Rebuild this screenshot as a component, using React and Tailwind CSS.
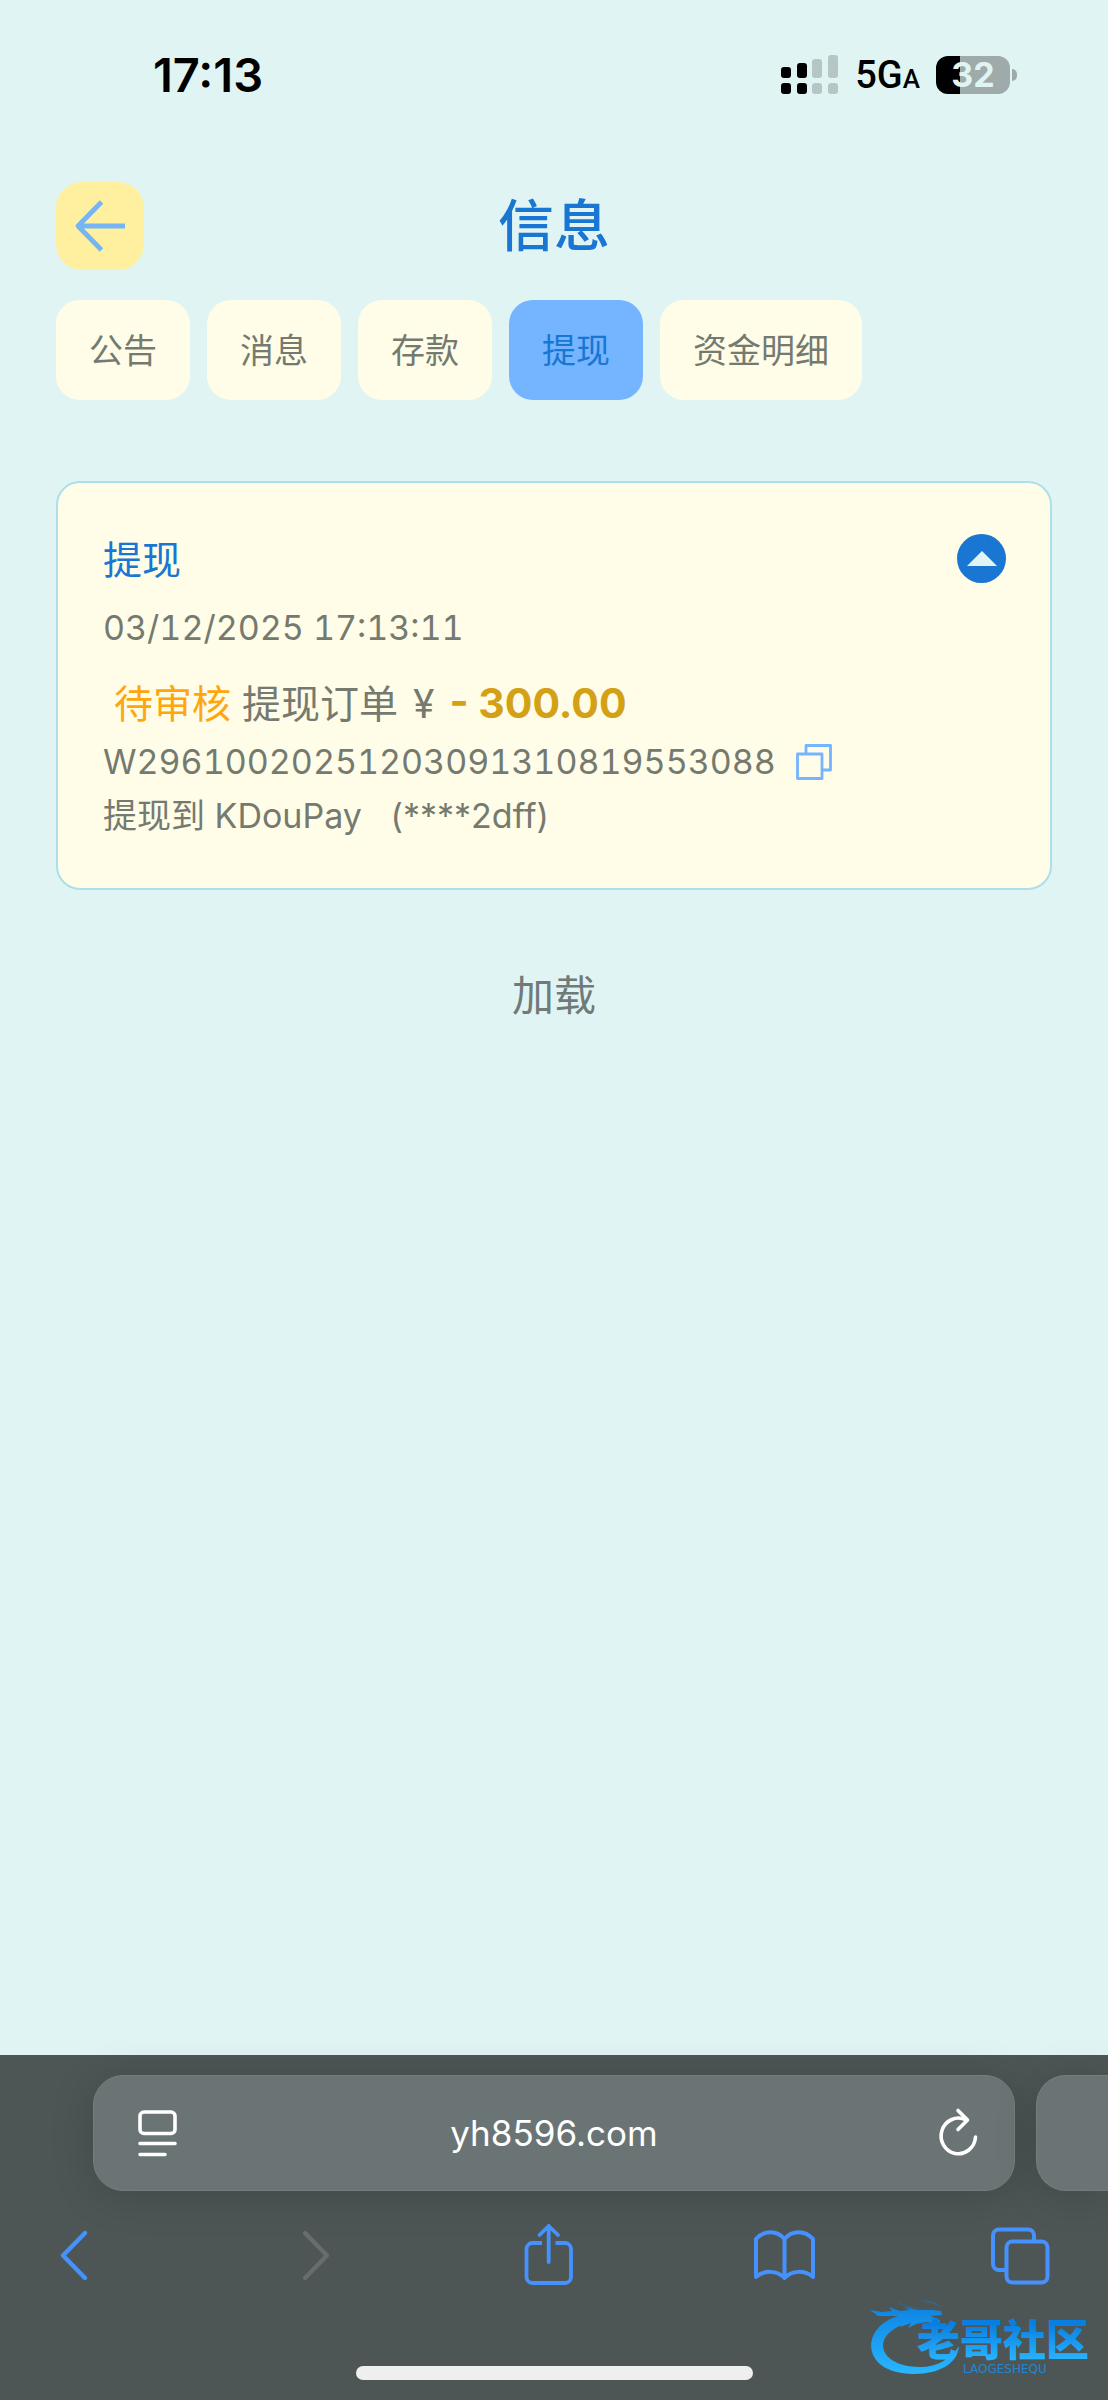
import React, { useState } from 'react';

const tabs = [
    { id: 'notice', label: '公告' },
    { id: 'message', label: '消息' },
    { id: 'deposit', label: '存款' },
    { id: 'withdraw', label: '提现' },
    { id: 'funds', label: '资金明细' },
];

const StatusBar = () => (
    <div className="flex h-[58px] items-center justify-between pl-[153px] pr-[91px] text-black">
        <span className="text-[47px] font-semibold leading-14">17:13</span>
        <div className="flex items-center">
            <svg width="58" height="40" viewBox="0 0 58 40" aria-hidden="true">
                <g fill="#000">
                    <rect x="0" y="12" width="10" height="11" rx="3" />
                    <rect x="0" y="28" width="10" height="11" rx="3" />
                    <rect x="16" y="8" width="10" height="15" rx="3" />
                    <rect x="16" y="28" width="10" height="11" rx="3" />
                </g>
                <g fill="#b5c6c5">
                    <rect x="31" y="4" width="10" height="19" rx="3" />
                    <rect x="31" y="28" width="10" height="11" rx="3" />
                    <rect x="47" y="0" width="10" height="23" rx="3" />
                    <rect x="47" y="28" width="10" height="11" rx="3" />
                </g>
            </svg>
            <span className="ml-4 pt-1 font-['Roboto',sans-serif] text-[38px] font-medium leading-14">
                5G<span className="text-[26px]">A</span>
            </span>
            <div className="ml-4 flex items-center gap-0.5">
                <span className="flex h-[38px] w-[74px] items-center justify-center rounded-xl bg-linear-to-r from-black from-32% to-[#9fabaa] to-32% text-[34px] font-bold leading-none text-[#e0f5f3]">
                    32
                </span>
                <span className="h-3 w-[5px] rounded-r-full bg-[#9fabaa]" />
            </div>
        </div>
    </div>
);

const RecordCard = () => {
    const [open, setOpen] = useState(true);

    return (
        <article className="mx-14 mt-[81px] rounded-3xl border-2 border-[#abdfe9] bg-[#fffde7] pt-[51px] pr-11 pb-[46px] pl-[45px] text-[#757a70]">
            <div className="flex h-[52px] items-start justify-between">
                <h2 className="text-[39px] leading-[52px] text-[#1976d2]">提现</h2>
                <button
                    type="button"
                    aria-label="收起"
                    onClick={() => setOpen(!open)}
                    className="flex size-[49px] items-center justify-center rounded-full bg-[#1976d2]"
                >
                    <svg width="30" height="15" viewBox="0 0 30 15" className={open ? '' : 'rotate-180'}>
                        <path d="M15 0L30 15H0z" fill="#e0f5f3" />
                    </svg>
                </button>
            </div>
            <p className="mt-4 text-[34px] leading-[52px] tabular-nums">03/12/2025 17:13:11</p>
            {open && (
                <>
                    <p className="mt-6 pl-[11px] text-[39px] leading-[52px]">
                        <span className="text-[#ffa60e]">待审核</span> 提现订单 <span className="ml-1">¥</span>{' '}
                        <b className="ml-1 text-[41px] leading-none text-[#d4a015]">- 300.00</b>
                    </p>
                    <div className="mt-1.5 flex items-center gap-5 text-[34px] leading-[52px] tabular-nums">
                        <span>W29610020251203091310819553088</span>
                        <button type="button" aria-label="复制">
                            <svg width="36" height="36" viewBox="0 0 36 36" fill="none" stroke="#75b4ff" strokeWidth="2.8" strokeLinejoin="round">
                                <path d="M10 10V1.500H34.500V26H26" />
                                <rect x="1.500" y="10" width="24.500" height="24.500" />
                            </svg>
                        </button>
                    </div>
                    <p className="mt-0.5 whitespace-pre text-[34px] leading-[52px]">提现到 KDouPay   (****2dff)</p>
                </>
            )}
        </article>
    );
};

const Watermark = () => (
    <svg width="228" height="80" viewBox="0 0 228 80" className="absolute right-3.5 bottom-6" aria-label="老哥社区">
        <defs>
            <linearGradient id="ring" x1="0" y1="10" x2="0" y2="78" gradientUnits="userSpaceOnUse">
                <stop offset="0" stopColor="#0d84e2" />
                <stop offset="1" stopColor="#29b6ff" />
            </linearGradient>
            <linearGradient id="letters" x1="0" y1="28" x2="0" y2="62" gradientUnits="userSpaceOnUse">
                <stop offset="0" stopColor="#0a7ee0" />
                <stop offset="1" stopColor="#26b1fc" />
            </linearGradient>
        </defs>
        <g fill="url(#ring)">
            <path d="M36 19C-6 28 -8 78 48 78C74 78 92 67 93 50C84 63 72 71 54 71C12 71 2 38 44 26Z" />
            {/* dragon head */}
            <path d="M4 14L16 16L26 15L23 11L34 15L44 14L38 11L52 14L66 14L75 15L76 19L64 20L74 24L73 28L60 26L50 28L42 32L45 27L34 31L38 26L26 24L34 20L12 20Z" />
            <path d="M30 5Q38 13 58 13Q40 11 30 5ZM52 4Q70 4 76 12Q68 7 52 4Z" opacity=".35" />
        </g>
        <text x="51" y="60" fontSize="43" fontWeight="900" fill="url(#letters)" fontFamily="'Noto Sans CJK SC', sans-serif">
            老哥社区
        </text>
        <text x="97" y="77" fontSize="12" fill="#1f86d2" fontFamily="'DejaVu Sans', sans-serif">
            LAOGESHEQU
        </text>
    </svg>
);

const BrowserBar = () => (
    <footer className="relative mt-auto bg-[#4d5655] pt-5 pb-5">
        <div className="flex gap-[21px] pl-[93px]">
            <div className="flex h-[116px] flex-1 items-center justify-between rounded-[30px] border border-[#747d7c] bg-[#6b7474] px-9 text-white shadow-[0_4px_44px_rgba(0,0,0,0.16)]">
                <button type="button" aria-label="页面菜单">
                    <svg width="56" height="56" viewBox="0 0 56 56" fill="none" stroke="currentColor" strokeWidth="3.6" strokeLinecap="round">
                        <rect x="10" y="7" width="35" height="21.500" rx="4" />
                        <path d="M10 38.500H45M10 49.500H35" />
                    </svg>
                </button>
                <input
                    type="text"
                    aria-label="网址"
                    defaultValue="yh8596.com"
                    className="min-w-0 flex-1 bg-transparent text-center text-[35px] leading-[52px] outline-none"
                />
                <button type="button" aria-label="刷新">
                    <svg width="56" height="56" viewBox="0 0 56 56" fill="none" stroke="currentColor" strokeWidth="3.6" strokeLinecap="round" strokeLinejoin="round">
                        <path d="M53.500 32A17.200 17.800 0 1 1 44 15" />
                        <path d="M36 5.500L45.500 15L36 24.500" />
                    </svg>
                </button>
            </div>
            <div className="h-[116px] w-[72px] rounded-l-[30px] border border-r-0 border-[#747d7c] bg-[#6b7474] shadow-[0_4px_44px_rgba(0,0,0,0.16)]" />
        </div>

        <nav className="mt-8 flex justify-between pr-14 pl-[43px] text-[#4592ff]">
            <button type="button" aria-label="后退">
                <svg width="64" height="64" viewBox="0 0 64 64" fill="none" stroke="currentColor" strokeWidth="4.4" strokeLinecap="round" strokeLinejoin="round">
                    <path d="M42 10L20 32.500L42 55" />
                </svg>
            </button>
            <button type="button" aria-label="前进" className="text-[#666d6c]">
                <svg width="64" height="64" viewBox="0 0 64 64" fill="none" stroke="currentColor" strokeWidth="4.400" strokeLinecap="round" strokeLinejoin="round">
                    <path d="M26 10L48 32.500L26 55" />
                </svg>
            </button>
            <button type="button" aria-label="分享">
                <svg width="64" height="64" viewBox="0 0 64 64" fill="none" stroke="currentColor" strokeWidth="3.800" strokeLinejoin="round">
                    <path d="M26 20H16.500a6 6 0 0 0-6 6V54a6 6 0 0 0 6 6H49a6 6 0 0 0 6-6V26a6 6 0 0 0-6-6H39.500" />
                    <path d="M32.700 39V3M23.500 12L32.700 3L42 12" strokeLinecap="round" />
                </svg>
            </button>
            <button type="button" aria-label="书签">
                <svg width="64" height="64" viewBox="0 0 64 64" fill="none" stroke="currentColor" strokeWidth="4" strokeLinecap="round" strokeLinejoin="round">
                    <path d="M32.500 16C25 7 12 7 4 16V54C12 47 25 47 32.500 55C40 47 53 47 61 54V16C53 7 40 7 32.500 16V55" />
                </svg>
            </button>
            <button type="button" aria-label="标签页">
                <svg width="64" height="64" viewBox="0 0 64 64" fill="none" stroke="currentColor" strokeWidth="4">
                    <path d="M18 47H11a6 6 0 0 1-6-6V12.500a6 6 0 0 1 6-6H40a6 6 0 0 1 6 6V18" />
                    <rect x="18.500" y="18.500" width="41" height="41" rx="6" />
                </svg>
            </button>
        </nav>

        <div className="mx-auto mt-[79px] h-3.5 w-[397px] rounded-full bg-[#efefef]" />
        <Watermark />
    </footer>
);

const App = () => {
    const [activeTab, setActiveTab] = useState('withdraw');

    return (
        <div className="flex min-h-screen flex-col overflow-x-hidden bg-[#e0f5f3] pt-[46px] font-['Inter','Noto_Sans_CJK_SC',sans-serif]">
            <StatusBar />

            <header className="mx-14 mt-[78px] grid grid-cols-3 items-center">
                <button type="button" aria-label="返回" className="flex size-[88px] items-center justify-center rounded-[26px] bg-[#fff09f]">
                    <svg width="52" height="52" viewBox="0 0 52 52" fill="none" stroke="#75b4f5" strokeWidth="4.800" strokeLinejoin="round">
                        <path d="M27.500 2L4 26L27.500 50M4 26H51" />
                    </svg>
                </button>
                <h1 className="text-center text-[56px] font-medium leading-[88px] text-[#1976d2]">信息</h1>
            </header>

            <nav className="mx-14 mt-[30px] flex gap-[17px]">
                {tabs.map((tab) => (
                    <button
                        key={tab.id}
                        type="button"
                        onClick={() => setActiveTab(tab.id)}
                        className={`h-[100px] rounded-3xl px-[33px] text-[34px] ${activeTab === tab.id
                                ? 'bg-[#75b4ff] text-[#1976d2]'
                                : 'bg-[#fffde7] text-[#757a70]'
                            }`}
                    >
                        {tab.label}
                    </button>
                ))}
            </nav>

            <RecordCard />

            <p className="my-20 text-center text-[42px] leading-[52px] text-[#717a78]">加载</p>

            <BrowserBar />
        </div>
    );
};

export default App;
